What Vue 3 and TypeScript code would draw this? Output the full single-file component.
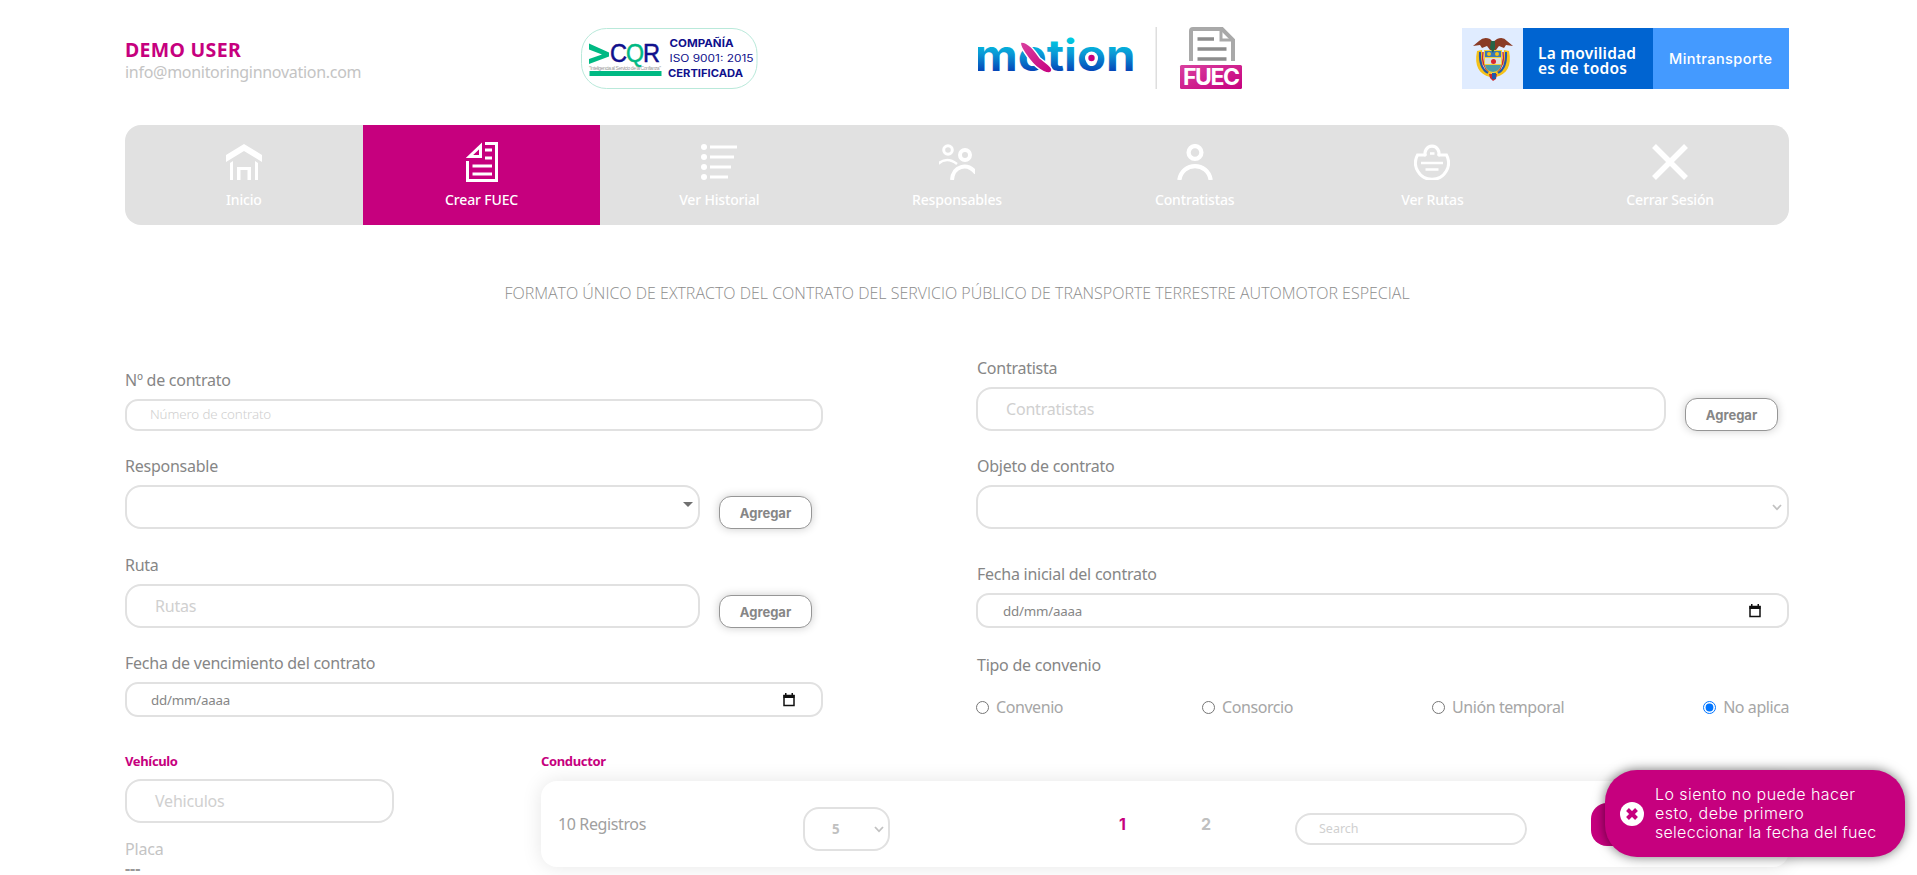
<script setup lang="ts">
import { ref } from 'vue'

interface NavItem {
  id: string
  label: string
  active?: boolean
}

const navItems: NavItem[] = [
  { id: 'home', label: 'Inicio' },
  { id: 'create', label: 'Crear FUEC', active: true },
  { id: 'list', label: 'Ver Historial' },
  { id: 'people', label: 'Responsables' },
  { id: 'person', label: 'Contratistas' },
  { id: 'routes', label: 'Ver Rutas' },
  { id: 'close', label: 'Cerrar Sesión' },
]

const agreements: string[] = ['Convenio', 'Consorcio', 'Unión temporal', 'No aplica']
const agreement = ref<string>('No aplica')
const page = ref<number>(1)
</script>

<template>
  <div class="page">
    <header class="header">
      <div class="user">
        <div class="user-name">DEMO USER</div>
        <div class="user-mail">info@monitoringinnovation.com</div>
      </div>

      <svg class="badge" width="178" height="62" viewBox="0 0 178 62">
        <rect x="0.5" y="0.5" width="175.500" height="60" rx="25" fill="#fff" stroke="#b9e9da" />
        <path d="M8 15.500 L28 24.500 V28.500 L8 36 V31 L21 26.600 L8 21.500 Z" fill="#00b983" />
        <g font-family="'Liberation Sans', sans-serif" font-size="25" fill="#10108c" stroke-width="0.500">
          <text x="29" y="33.500" textLength="17" lengthAdjust="spacingAndGlyphs" stroke="#10108c">C</text>
          <text x="45" y="33.500" textLength="18" lengthAdjust="spacingAndGlyphs" fill="#00b983" stroke="#00b983">Q</text>
          <text x="62" y="33.500" textLength="17" lengthAdjust="spacingAndGlyphs" stroke="#10108c">R</text>
        </g>
        <text x="8" y="41.500" font-family="'Liberation Sans', sans-serif" font-size="5" fill="#999" textLength="72">"Inteligencia al Servicio de la Confianza"</text>
        <rect x="8.500" y="43" width="72" height="5" fill="#00b983" />
        <g font-family="Inter, sans-serif" font-size="11" fill="#10108c">
          <text x="88.500" y="18.500" font-weight="700" font-size="10.500" textLength="64" lengthAdjust="spacingAndGlyphs">COMPAÑÍA</text>
          <text x="88.500" y="33.500" font-size="10" textLength="84" lengthAdjust="spacingAndGlyphs">ISO 9001: 2015</text>
          <text x="87" y="48.500" font-weight="700" font-size="10.500" textLength="75" lengthAdjust="spacingAndGlyphs">CERTIFICADA</text>
        </g>
      </svg>

      <svg class="brand" width="266" height="64" viewBox="0 0 266 64">
        <defs>
          <linearGradient id="wave" gradientUnits="userSpaceOnUse" x1="0" y1="12" x2="0" y2="44">
            <stop offset="0" stop-color="#00cbe0" />
            <stop offset="0.450" stop-color="#0a9ad6" />
            <stop offset="1" stop-color="#0546b8" />
          </linearGradient>
          <linearGradient id="pink" x1="0" y1="0" x2="1" y2="1">
            <stop offset="0" stop-color="#d9419f" />
            <stop offset="1" stop-color="#c6007e" />
          </linearGradient>
        </defs>
        <text x="-3.500" y="43.500" font-family="Inter, sans-serif" font-weight="700" font-size="43" fill="url(#wave)" textLength="161" lengthAdjust="spacingAndGlyphs">motion</text>
        <circle cx="113.500" cy="31" r="6.500" fill="#fff" />
        <circle cx="113.500" cy="31" r="3.200" fill="#c6007e" />
        <path d="M43 15 C50 14 57 24 62 31 C68 36 74 39 74 43 C73 50 60 44 51 32 C45 24 41 17 43 15 Z" fill="url(#pink)" stroke="#fff" stroke-width="1.500" />
        <rect x="177.500" width="1.500" height="62" fill="#dedede" />
        <g fill="none" stroke="#a9a9a9" stroke-width="4">
          <path d="M213 34 V4 Q213 2 215 2 H244 L255 13 V34" />
          <path d="M243 2 V13 H255" stroke-width="3" />
          <path d="M219.500 12 H236 M219.500 22 H248.500 M219.500 32 H248.500" stroke="#8d8d8d" stroke-width="3.500" />
        </g>
        <rect x="202" y="38" width="62" height="24" rx="1.500" fill="url(#pink)" />
        <text x="205" y="58" font-family="Inter, sans-serif" font-weight="700" font-size="23" fill="#fff" textLength="57">FUEC</text>
      </svg>

      <div class="ministry">
        <div class="arms">
          <svg width="42" height="46" viewBox="0 0 42 46">
            <path d="M5 15 C2 30 7 38 18 41 L21 35 L24 41 C35 38 40 30 37 15 L32 14 L31 33 H11 L10 14 Z" fill="#f4c21a" />
            <path d="M8 16 Q7 32 16 37 M34 16 Q35 32 26 37" fill="none" stroke="#2457a7" stroke-width="2" />
            <path d="M11 16 Q9 30 17 35 M31 16 Q33 30 25 35" fill="none" stroke="#ca2a32" stroke-width="1.500" />
            <path d="M12 14 H30 V27 Q29 35 21 37 Q13 35 12 27 Z" fill="#f1d13b" />
            <path d="M13 15 H29 V21 H13 Z" fill="#3979b6" />
            <path d="M13 22 H29 V28 H13 Z" fill="#d9e0dc" />
            <path d="M13 29 H29 Q28 35 21 36 Q14 35 13 29 Z" fill="#4b9ba6" />
            <circle cx="17" cy="18" r="2" fill="#f4c21a" />
            <circle cx="25" cy="18" r="2" fill="#f4c21a" />
            <circle cx="21.500" cy="25.500" r="2.500" fill="#d9252b" />
            <path d="M1 10 L7 5 Q12 0 18 3 L21 6 L25 3 Q31 0 35 5 L41 10 L34 9 L32 12 L27 10 L24 14 H18 L15 10 L10 12 L8 9 Z" fill="#8a3b25" />
            <path d="M19 5 H23 V12 L21 17 L18 12 Z" fill="#276448" />
            <path d="M17 38 H25 L24 43 L21 45 L18 42 Z" fill="#ca2a32" />
            <path d="M20 37 H24 V43 H20 Z" fill="#2457a7" />
          </svg>
        </div>
        <div class="slogan">
          <svg width="130" height="61" viewBox="0 0 130 61" font-family="'Noto Sans', sans-serif" font-weight="600" font-size="15.500" fill="#fff">
            <text x="15" y="30.500" textLength="98">La movilidad</text>
            <text x="15" y="45.500" textLength="89">es de todos</text>
          </svg>
        </div>
        <div class="ministry-name">
          <svg width="135" height="61" viewBox="0 0 135 61" font-family="Inter, sans-serif" font-weight="500" font-size="14.500" fill="#fff">
            <text x="16" y="35.500" textLength="103">Mintransporte</text>
          </svg>
        </div>
      </div>
    </header>

    <nav class="nav">
      <a v-for="item in navItems" :key="item.id" class="nav-item" :class="{ active: item.active }">
        <svg v-if="item.id === 'home'" class="nav-icon" viewBox="0 0 36 36" fill="#fff">
          <path d="M0 11 L18 0 L36 11 V18 L18 7 L0 18 Z" />
          <path d="M4 19 L7 17 V36 H4 Z M29 17 L32 19 V36 H29 Z M11 23 H25 V36 H21.500 V26 H14.500 V36 H11 Z" />
        </svg>
        <svg v-else-if="item.id === 'create'" class="nav-icon tall" viewBox="0 0 32 40" fill="none" stroke="#fff">
          <path d="M19 1.500 H30.500 V38.500 H1.500 V19" stroke-width="3" />
          <path d="M14.500 4 V14.500 H3.500 Z" stroke-width="3" />
          <path d="M19 8 H26 M19 16 H26 M6.500 24 H26 M6.500 32 H26" stroke-width="3" />
        </svg>
        <svg v-else-if="item.id === 'list'" class="nav-icon" viewBox="0 0 36 36" fill="#fff">
          <circle cx="3" cy="3" r="3" /><circle cx="3" cy="13" r="3" />
          <circle cx="3" cy="23" r="3" /><circle cx="3" cy="33" r="3" />
          <path d="M9 1.500 H36 V4.500 H9 Z M9 11.500 H33 V14.500 H9 Z M9 21.500 H30 V24.500 H9 Z M9 31.500 H27 V34.500 H9 Z" />
        </svg>
        <svg v-else-if="item.id === 'people'" class="nav-icon" viewBox="0 0 36 36" fill="none" stroke="#fff">
          <circle cx="9" cy="6" r="4.300" stroke-width="3" />
          <circle cx="26" cy="11" r="5" stroke-width="4" />
          <path d="M-1 20 Q8 12 18 20" stroke-width="2.500" />
          <path d="M13 36 C14 22 28 18 37 29" stroke-width="4" />
        </svg>
        <svg v-else-if="item.id === 'person'" class="nav-icon" viewBox="0 0 36 36" fill="none" stroke="#fff">
          <circle cx="18" cy="8.500" r="6.400" stroke-width="4.300" />
          <path d="M2.300 36 C5 17.500 31 17.500 33.700 36" stroke-width="4.300" />
        </svg>
        <svg v-else-if="item.id === 'routes'" class="nav-icon" viewBox="0 0 36 36" fill="none" stroke="#fff">
          <path d="M12 11 H3.500 A16.500 16.500 0 1 0 32.500 11 H24" stroke-width="3" />
          <path d="M11.500 12 A7 7.200 0 1 1 24.500 12" stroke-width="3.200" />
          <path d="M16 9.500 H20.500" stroke-width="2.500" />
          <path d="M7 19 H29 M11.500 25.500 H24.500" stroke-width="2.600" />
        </svg>
        <svg v-else class="nav-icon" viewBox="0 0 36 36" stroke="#fff" stroke-width="5.500">
          <path d="M2 2 L34 34 M34 2 L2 34" />
        </svg>
        <span class="nav-label">{{ item.label }}</span>
      </a>
    </nav>

    <h1 class="title">FORMATO ÚNICO DE EXTRACTO DEL CONTRATO DEL SERVICIO PÚBLICO DE TRANSPORTE TERRESTRE AUTOMOTOR ESPECIAL</h1>

    <section class="form">
      <div class="column left">
        <div class="field">
          <label>Nº de contrato</label>
          <div class="box small">Número de contrato</div>
        </div>
        <div class="field">
          <label>Responsable</label>
          <div class="row">
            <div class="box combo">
              <span></span>
              <svg class="caret" width="10" height="5" viewBox="0 0 10 5"><path d="M0 0 H10 L5 5 Z" fill="#707070" /></svg>
            </div>
            <button class="add">Agregar</button>
          </div>
        </div>
        <div class="field">
          <label>Ruta</label>
          <div class="row">
            <div class="box combo">Rutas</div>
            <button class="add">Agregar</button>
          </div>
        </div>
        <div class="field">
          <label>Fecha de vencimiento del contrato</label>
          <div class="box date">
            <span>dd/mm/aaaa</span>
            <svg width="12" height="14" viewBox="0 0 12 14"><path d="M1 2.500 H11 V12.500 H1 Z" fill="none" stroke="#111" stroke-width="1.500" /><path d="M0.500 2 H11.500 V5 H0.500 Z M2 0 H3.500 V2 H2 Z M8.500 0 H10 V2 H8.500 Z" fill="#111" /></svg>
          </div>
        </div>
      </div>

      <div class="column right">
        <div class="field">
          <label>Contratista</label>
          <div class="row">
            <div class="box combo">Contratistas</div>
            <button class="add">Agregar</button>
          </div>
        </div>
        <div class="field">
          <label>Objeto de contrato</label>
          <div class="box select">
            <svg width="10" height="7" viewBox="0 0 10 7"><path d="M1 1 L5 5.300 L9 1" fill="none" stroke="#c2c2c2" stroke-width="1.800" /></svg>
          </div>
        </div>
        <div class="field">
          <label>Fecha inicial del contrato</label>
          <div class="box date">
            <span>dd/mm/aaaa</span>
            <svg width="12" height="14" viewBox="0 0 12 14"><path d="M1 2.500 H11 V12.500 H1 Z" fill="none" stroke="#111" stroke-width="1.500" /><path d="M0.500 2 H11.500 V5 H0.500 Z M2 0 H3.500 V2 H2 Z M8.500 0 H10 V2 H8.500 Z" fill="#111" /></svg>
          </div>
        </div>
        <div class="field">
          <label>Tipo de convenio</label>
          <div class="radios">
            <label v-for="name in agreements" :key="name" class="radio">
              <input v-model="agreement" type="radio" name="agreement" :value="name" />
              <span>{{ name }}</span>
            </label>
          </div>
        </div>
      </div>
    </section>

    <section class="bottom">
      <div class="vehicle">
        <h2>Vehículo</h2>
        <div class="box combo">Vehiculos</div>
        <div class="plate">Placa</div>
        <div class="plate-value">---</div>
      </div>
      <div class="driver">
        <h2>Conductor</h2>
        <div class="card">
          <span class="count">10 Registros</span>
          <div class="size">
            <span>5</span>
            <svg width="10" height="7" viewBox="0 0 10 7"><path d="M1 1 L5 5.300 L9 1" fill="none" stroke="#c2c2c2" stroke-width="1.800" /></svg>
          </div>
          <div class="pager">
            <span v-for="n in 2" :key="n" :class="{ current: n === page }">{{ n }}</span>
          </div>
          <div class="search">Search</div>
          <button class="create"></button>
        </div>
      </div>
    </section>

    <aside class="toast">
      <svg width="24" height="24" viewBox="0 0 24 24"><circle cx="12" cy="12" r="12" fill="#fff" /><path d="M7.500 7.500 L16.500 16.500 M16.500 7.500 L7.500 16.500" stroke="#c6007e" stroke-width="4" /></svg>
      <p>
        <span class="l1">Lo siento no puede hacer</span>
        <span class="l2">esto, debe primero</span>
        <span class="l3">seleccionar la fecha del fuec</span>
      </p>
    </aside>
  </div>
</template>

<style>
body {
  margin: 0;
  background: #fff;
  overflow: hidden;
}
</style>

<style scoped>
.page {
  box-sizing: border-box;
  width: 1917px;
  height: 875px;
  padding: 27px 128px 0 125px;
  overflow: hidden;
  position: relative;
  font-family: 'Noto Sans', sans-serif;
  font-size: 16px;
  color: #868686;
}
.page * {
  box-sizing: border-box;
}
.header {
  display: grid;
  grid-template-columns: 456px 397px 484px 327px;
  height: 98px;
  align-items: start;
}
.user {
  padding-top: 9px;
}
.user-name {
  color: #c6007e;
  font-size: 19.5px;
  font-weight: 700;
  line-height: 27px;
  letter-spacing: 0.3px;
}
.user-mail {
  color: #c4c4c4;
  line-height: 19px;
  letter-spacing: -0.29px;
}
.badge {
  margin-top: 1px;
}
.ministry {
  display: grid;
  grid-template-columns: 61px 130px 136px;
  height: 61px;
  margin-top: 1px;
}
.ministry svg {
  display: block;
}
.arms {
  display: flex;
  align-items: center;
  justify-content: center;
  background: #e0ecff;
}
.slogan {
  background: #0064d1;
}
.ministry-name {
  background: #449aff;
}
.nav {
  display: grid;
  grid-template-columns: repeat(7, 1fr);
  height: 100px;
  border-radius: 16px;
  overflow: hidden;
  background: #e1e1e1;
}
.nav-item {
  display: flex;
  flex-direction: column;
  align-items: center;
  padding-top: 19px;
  color: #fff;
  font-size: 14px;
  font-weight: 500;
  letter-spacing: -0.16px;
}
.nav-item.active {
  background: #c6007e;
}
.nav-icon {
  width: 36px;
  height: 36px;
}
.nav-icon.tall {
  width: 32px;
  height: 40px;
  margin: -2px 0;
}
.nav-label {
  margin-top: 10px;
  line-height: 20px;
}
.title {
  margin: 56px 0 0;
  font-family: 'Open Sans', sans-serif;
  font-size: 16px;
  font-weight: 300;
  line-height: 24px;
  text-align: center;
  color: #8c8c8c;
  white-space: nowrap;
}
.form {
  display: grid;
  grid-template-columns: 698px 813px;
  column-gap: 153px;
  height: 446px;
  padding-top: 51px;
}
.left {
  padding-top: 12px;
}
.field {
  margin-bottom: 24px;
}
.left .field:nth-child(odd) {
  margin-bottom: 23px;
}
.right .field:nth-child(1) {
  margin-bottom: 23px;
}
.right .field:nth-child(2) {
  margin-bottom: 33px;
}
.right .field:nth-child(3) {
  margin-bottom: 25px;
}
.field > label {
  display: block;
  line-height: 24px;
  margin-bottom: 7px;
  letter-spacing: -0.25px;
}
.right .field > label {
  padding-left: 1px;
}
.box {
  display: flex;
  align-items: center;
  border: 2px solid #e1e1e1;
  border-radius: 16px;
  background: #fff;
  color: #d0d0d0;
  letter-spacing: -0.2px;
}
.box.small {
  height: 32px;
  padding: 0 23px 2px;
  border-radius: 13px;
  font-size: 13.333px;
  font-weight: 300;
  letter-spacing: -0.12px;
}
.box.combo {
  height: 44px;
  padding: 0 5px 0 28px;
  flex: 1;
  justify-content: space-between;
}
.caret {
  margin-top: -6px;
}
.box.select {
  height: 44px;
  justify-content: flex-end;
  padding-right: 5px;
}
.box.date {
  height: 35px;
  justify-content: space-between;
  padding: 0 26px 0 24px;
  border-radius: 13px;
  color: #868686;
  font-size: 13.333px;
}
.right .box.date {
  padding-left: 25px;
}
.row {
  display: flex;
  align-items: flex-end;
  padding-right: 11px;
}
.add {
  width: 93px;
  height: 33px;
  margin-left: 19px;
  padding: 0;
  border: 1px solid #969696;
  border-radius: 12px;
  background: #fff;
  box-shadow: 0 0 10px rgba(0, 0, 0, 0.2);
  color: #868686;
  font-family: Inter, sans-serif;
  font-size: 13px;
  font-weight: 700;
}
.radios {
  display: flex;
  justify-content: space-between;
  padding-top: 11px;
}
.radio {
  display: flex;
  align-items: center;
  line-height: 24px;
  color: #a6a6a6;
  letter-spacing: -0.43px;
}
.radio input {
  width: 13px;
  height: 13px;
  margin: 0 7px 0 0;
}
.bottom {
  display: grid;
  grid-template-columns: 269px 1248px;
  column-gap: 147px;
}
.bottom h2 {
  margin: 0;
  height: 28px;
  line-height: 20px;
  font-size: 13px;
  font-weight: 700;
  letter-spacing: -0.35px;
  color: #c6007e;
}
.plate {
  margin-top: 14px;
  line-height: 24px;
  letter-spacing: -0.2px;
  color: #c4c4c4;
}
.plate-value {
  line-height: 14px;
  font-weight: 700;
  color: #999;
}
.card {
  display: grid;
  grid-template-columns: 245px 87px 314px 91px 232px 64px 180px;
  align-items: center;
  height: 86px;
  margin-top: 2px;
  padding-left: 17px;
  border-radius: 16px;
  background: #fff;
  box-shadow: 0 0 20px rgba(0, 0, 0, 0.1);
}
.count {
  grid-column: 1;
  color: #a0a0a0;
  letter-spacing: -0.38px;
}
.size {
  grid-column: 2;
  display: flex;
  align-items: center;
  justify-content: space-between;
  height: 44px;
  margin-top: 10px;
  padding: 0 4px 0 27px;
  border: 2px solid #e1e1e1;
  border-radius: 16px;
  font-weight: 700;
  font-size: 13.333px;
  color: #c0c0c0;
}
.pager {
  grid-column: 3 / 5;
  display: flex;
  gap: 75px;
  padding-left: 229px;
  font-family: Inter, sans-serif;
  font-weight: 700;
  color: #c0c0c0;
}
.current {
  color: #c6007e;
}
.search {
  grid-column: 5;
  height: 32px;
  margin-top: 10px;
  padding: 0 22px;
  border: 2px solid #e1e1e1;
  border-radius: 16px;
  line-height: 28px;
  font-size: 12.5px;
  color: #d0d0d0;
}
.create {
  grid-column: 7;
  height: 43px;
  border: 0;
  border-radius: 16px;
  background: #c6007e;
}
.toast {
  position: absolute;
  right: 12px;
  bottom: 18px;
  display: flex;
  align-items: center;
  width: 300px;
  height: 87px;
  padding-left: 15px;
  border-radius: 32px;
  background: #c6007e;
  box-shadow: 0 0 12px rgba(0, 0, 0, 0.55);
  color: #fff;
}
.toast p {
  margin: 0 0 0 11px;
  font-family: Inter, sans-serif;
  font-size: 16px;
  font-weight: 300;
  line-height: 19px;
}
.toast p span {
  display: block;
  white-space: nowrap;
}
.l1 {
  letter-spacing: 0.45px;
}
.l2 {
  letter-spacing: 0.48px;
}
.l3 {
  letter-spacing: 0.28px;
}
</style>
